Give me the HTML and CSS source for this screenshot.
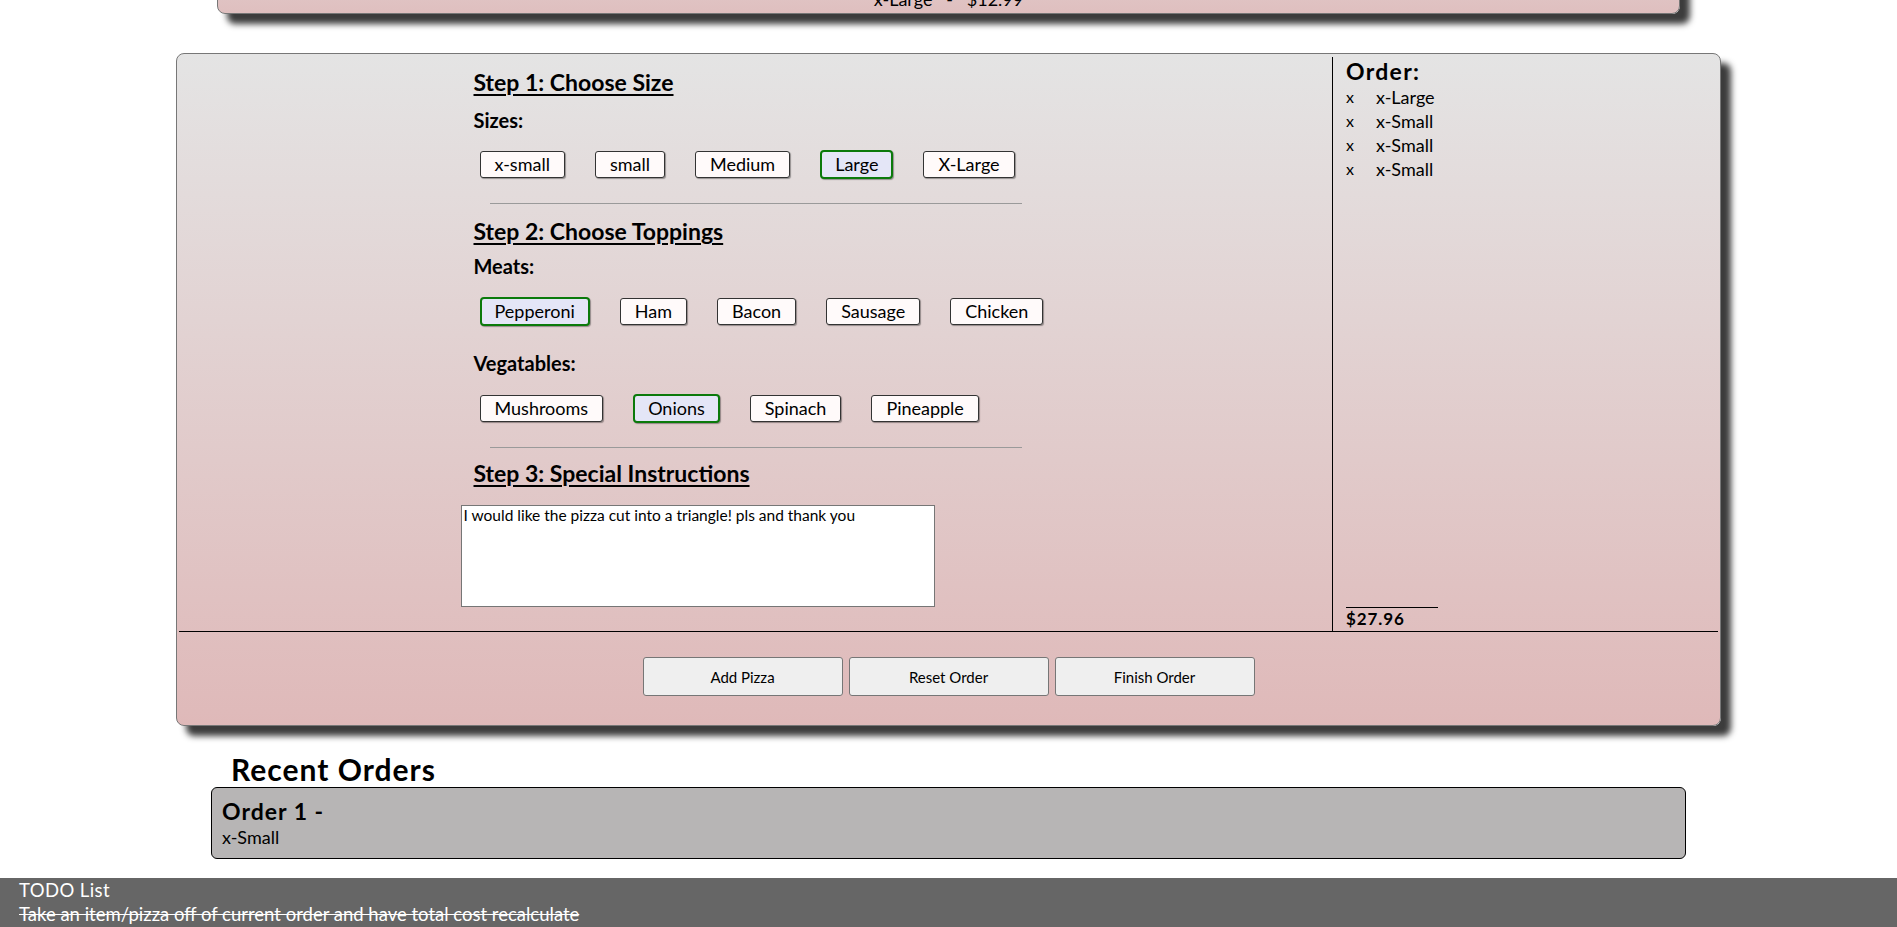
FILE: index.html
```html
<!DOCTYPE html>
<html lang="en">
<head>
<meta charset="utf-8">
<title>Pizza Order</title>
<link rel="stylesheet" href="styles.css">
</head>
<body>
<div class="page">
  <div class="card prev-card">
    <div class="prev-line">x-Large &nbsp; - &nbsp; $12.99</div>
  </div>

  <div class="card main-card">
    <div class="main-top">
      <div class="builder">
        <div class="column">
          <h3 class="step step1">Step 1: Choose Size</h3>
          <h4 class="group g-sizes">Sizes:</h4>
          <div class="opts opts-sizes">
            <button class="opt">x-small</button>
            <button class="opt">small</button>
            <button class="opt">Medium</button>
            <button class="opt selected">Large</button>
            <button class="opt">X-Large</button>
          </div>
          <hr class="divider">
          <h3 class="step step2">Step 2: Choose Toppings</h3>
          <h4 class="group g-meats">Meats:</h4>
          <div class="opts opts-meats">
            <button class="opt selected">Pepperoni</button>
            <button class="opt">Ham</button>
            <button class="opt">Bacon</button>
            <button class="opt">Sausage</button>
            <button class="opt">Chicken</button>
          </div>
          <h4 class="group g-veg">Vegatables:</h4>
          <div class="opts opts-veg">
            <button class="opt">Mushrooms</button>
            <button class="opt selected">Onions</button>
            <button class="opt">Spinach</button>
            <button class="opt">Pineapple</button>
          </div>
          <hr class="divider">
          <h3 class="step step3">Step 3: Special Instructions</h3>
          <textarea class="notes">I would like the pizza cut into a triangle! pls and thank you</textarea>
        </div>
      </div>
      <div class="order">
        <h3 class="order-title">Order:</h3>
        <ul class="order-list">
          <li><span class="rm">x</span><span>x-Large</span></li>
          <li><span class="rm">x</span><span>x-Small</span></li>
          <li><span class="rm">x</span><span>x-Small</span></li>
          <li><span class="rm">x</span><span>x-Small</span></li>
        </ul>
        <div class="total">$27.96</div>
      </div>
    </div>
    <div class="actions">
      <button class="action">Add Pizza</button>
      <button class="action">Reset Order</button>
      <button class="action">Finish Order</button>
    </div>
  </div>

  <h2 class="recent-title">Recent Orders</h2>
  <div class="recent-box">
    <div class="recent-name">Order 1 -</div>
    <div class="recent-item">x-Small</div>
  </div>
</div>

<footer class="todo">
  <div class="todo-title">TODO List</div>
  <div class="todo-item done">Take an item/pizza off of current order and have total cost recalculate</div>
</footer>
</body>
</html>
```

FILE: styles.css
```css
* { box-sizing: border-box; }

html, body {
  margin: 0;
  padding: 0;
}

body {
  font-family: "Lato", "Open Sans", sans-serif;
  color: #000;
  background: #fff;
  overflow: hidden;
  height: 927px;
}

.page {
  padding-bottom: 60px;
}

.card {
  border: 1px solid #777;
  border-radius: 8px;
  background: linear-gradient(to bottom, #e4e4e4 0%, #dfb9b9 100%);
  box-shadow: 10px 10px 6px #3c3c3c;
}

.prev-card {
  width: 1463px;
  margin: -50px auto 0;
  height: 64px;
  display: flex;
  align-items: flex-end;
  justify-content: center;
  padding-bottom: 3px;
  background: linear-gradient(to bottom, #e2d0d0 0%, #dfbfbf 100%);
}

.prev-line {
  font-size: 18px;
  line-height: 22px;
  white-space: pre;
}

.main-card {
  width: 1545px;
  margin: 39px auto 0;
  padding: 2px;
}

.main-top {
  display: flex;
  border-bottom: 1px solid #000;
  height: 576px;
}

.builder {
  width: 1154px;
  border-right: 1px solid #000;
  margin-top: 1px;
  display: flex;
  justify-content: center;
}

.column {
  width: 590px;
  padding-top: 12px;
}

.step {
  margin: 0;
  padding-left: 13px;
  font-size: 23px;
  line-height: 26px;
  font-weight: 700;
  text-decoration: underline;
  text-decoration-thickness: 2px;
  text-underline-offset: 3px;
}

.group {
  margin: 0;
  padding-left: 13px;
  font-size: 20px;
  line-height: 22px;
  font-weight: 700;
}

.g-sizes { margin-top: 14px; }
.g-meats { margin-top: 11px; }
.g-veg { margin-top: 26px; }

.opts {
  display: flex;
  align-items: center;
  gap: 30px;
  padding-left: 19px;
  height: 30px;
}

.opts-sizes { margin-top: 18px; }
.opts-meats { margin-top: 19px; }
.opts-veg { margin-top: 19px; }

.opt {
  font-family: inherit;
  font-size: 18px;
  line-height: 23px;
  color: #000;
  background: #fffafa;
  border: 1px solid #333;
  border-radius: 3px;
  padding: 1px 14px;
  box-shadow: 1px 1px 1px rgba(0,0,0,0.35);
  margin: 0;
}

.opt.selected {
  background: #e4e6f7;
  border: 2px solid #0b7a0b;
  padding: 1px 13px;
  border-radius: 4px;
}

.divider {
  width: 532px;
  margin: 24px auto 0;
  border: 0;
  border-top: 1px solid #9a9a9a;
  height: 0;
}

.step2 { margin-top: 14px; }
.step3 { margin-top: 12px; }

.notes {
  display: block;
  margin-top: 19px;
  width: 474px;
  height: 102px;
  resize: none;
  border: 1px solid #767676;
  background: #fff;
  font-family: inherit;
  font-size: 15.5px;
  line-height: 18px;
  padding: 0 2px;
  color: #000;
}

.order {
  flex: 1;
  display: flex;
  flex-direction: column;
  padding-left: 13px;
  padding-top: 1px;
}

.order-title {
  margin: 0;
  font-size: 23px;
  line-height: 28px;
  font-weight: 700;
  letter-spacing: 1.3px;
}

.order-list {
  list-style: none;
  margin: 0;
  padding: 0;
}

.order-list li {
  display: flex;
  font-size: 18px;
  line-height: 24px;
}

.rm {
  width: 30px;
  font-size: 16px;
}

.total {
  margin-top: auto;
  width: 92px;
  border-top: 1px solid #000;
  font-size: 17px;
  line-height: 22px;
  font-weight: 700;
  letter-spacing: 0.9px;
  padding-bottom: 1px;
}

.actions {
  display: flex;
  justify-content: center;
  gap: 6px;
  padding: 25px 0 27px;
}

.action {
  width: 200px;
  height: 39px;
  font-family: inherit;
  font-size: 15px;
  color: #000;
  background: #efefef;
  border: 1px solid #767676;
  border-radius: 3px;
  margin: 0;
}

.recent-title {
  width: 1475px;
  margin: 28px auto 0;
  padding-left: 20px;
  font-size: 30px;
  line-height: 30px;
  font-weight: 700;
  letter-spacing: 1px;
}

.recent-box {
  width: 1475px;
  margin: 3px auto 0;
  background: #b7b5b5;
  border: 1px solid #000;
  border-radius: 6px;
  padding: 8px 10px 10px;
}

.recent-name {
  font-size: 23px;
  line-height: 30px;
  font-weight: 700;
  letter-spacing: 1px;
}

.recent-item {
  font-size: 18px;
  line-height: 22px;
}

.todo {
  position: fixed;
  left: 0;
  right: 0;
  bottom: 0;
  height: 49px;
  background: #666;
  color: #fff;
  padding-left: 19px;
}

.todo-title,
.todo-item {
  font-size: 18.5px;
  line-height: 24px;
}

.todo-title {
  letter-spacing: 0.4px;
}

.done {
  text-decoration: line-through;
}
```
